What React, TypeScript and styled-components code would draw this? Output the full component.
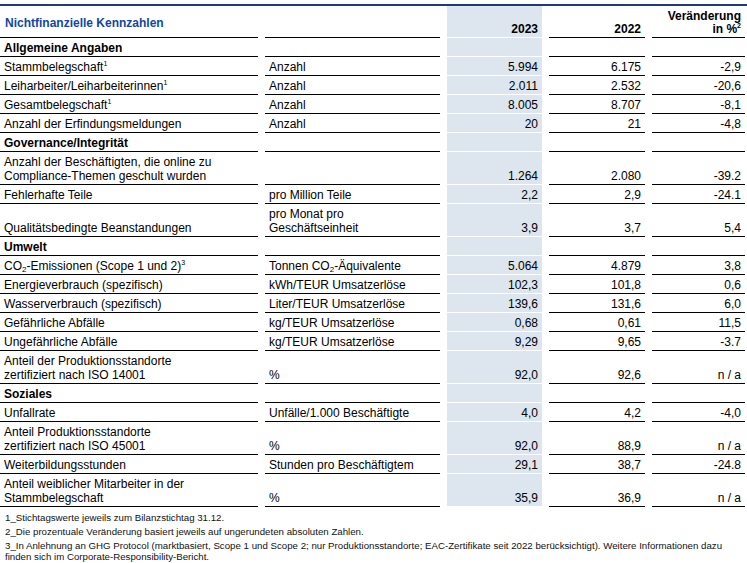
import React from "react";
import styled, { createGlobalStyle } from "styled-components";

const Global = createGlobalStyle`
  html, body { margin: 0; padding: 0; background: #fff; }
  body { font-family: "Liberation Sans", Arial, sans-serif; color: #000; }
`;

const COLS = "258px 175px 95px 96px 93px";
const SHADE = "#dde5ee";

const Page = styled.div`
  width: 747px;
  padding-top: 4px;
`;

const TopRule = styled.div`
  height: 2px;
  background: #1f3a78;
`;

const Row = styled.div`
  display: grid;
  grid-template-columns: ${COLS};
  column-gap: 7px;
  width: 745px;
`;

const Cell = styled.div<{ $align?: "left" | "right"; $shade?: boolean; $bold?: boolean }>`
  display: flex;
  flex-direction: column;
  justify-content: flex-end;
  text-align: ${(p) => (p.$align === "right" ? "right" : "left")};
  font-size: 12px;
  line-height: 14px;
  font-weight: ${(p) => (p.$bold ? 700 : 400)};
  padding: 3px ${(p) => (p.$align === "right" ? "4px" : "0")} 1px
    ${(p) => (p.$align === "right" ? "0" : "4px")};
  border-bottom: 1px solid ${(p) => (p.$shade ? "#fff" : "#000")};
  background: ${(p) => (p.$shade ? SHADE : "transparent")};
`;

const Inner = styled.div`
  display: block;
`;

const HeadCell = styled(Cell)`
  line-height: 13px;
  padding-top: 2px;
  padding-bottom: 1px;
  min-height: 28px;
`;

const Title = styled.div`
  color: #1246a6;
  font-weight: 700;
  font-size: 12px;
  line-height: 14px;
  padding: 0 0 6px 1px;
`;

const Sup = styled.sup`
  font-size: 7px;
  line-height: 0;
  vertical-align: 5px;
`;

const Sub = styled.sub`
  font-size: 8px;
  line-height: 0;
  vertical-align: -2px;
`;

const Notes = styled.div`
  padding: 5px 0 0 5px;
  font-family: "Liberation Sans", Arial, sans-serif;
  font-size: 9.7px;
  color: #111;
`;

const Note = styled.p`
  margin: 0 0 3px 0;
  line-height: 11px;
  white-space: nowrap;
`;

type DataRow = {
  label: React.ReactNode;
  unit?: React.ReactNode;
  v23: string;
  v22: string;
  chg: string;
};

type Block = { section: string; rows: DataRow[] };

const blocks: Block[] = [
  {
    section: "Allgemeine Angaben",
    rows: [
      { label: <>Stammbelegschaft<Sup>1</Sup></>, unit: "Anzahl", v23: "5.994", v22: "6.175", chg: "-2,9" },
      { label: <>Leiharbeiter/Leiharbeiterinnen<Sup>1</Sup></>, unit: "Anzahl", v23: "2.011", v22: "2.532", chg: "-20,6" },
      { label: <>Gesamtbelegschaft<Sup>1</Sup></>, unit: "Anzahl", v23: "8.005", v22: "8.707", chg: "-8,1" },
      { label: "Anzahl der Erfindungsmeldungen", unit: "Anzahl", v23: "20", v22: "21", chg: "-4,8" },
    ],
  },
  {
    section: "Governance/Integrität",
    rows: [
      {
        label: <>Anzahl der Beschäftigten, die online zu<br />Compliance-Themen geschult wurden</>,
        unit: "",
        v23: "1.264",
        v22: "2.080",
        chg: "-39.2",
      },
      { label: "Fehlerhafte Teile", unit: "pro Million Teile", v23: "2,2", v22: "2,9", chg: "-24.1" },
      {
        label: "Qualitätsbedingte Beanstandungen",
        unit: <>pro Monat pro<br />Geschäftseinheit</>,
        v23: "3,9",
        v22: "3,7",
        chg: "5,4",
      },
    ],
  },
  {
    section: "Umwelt",
    rows: [
      {
        label: <>CO<Sub>2</Sub>-Emissionen (Scope 1 und 2)<Sup>3</Sup></>,
        unit: <>Tonnen CO<Sub>2</Sub>-Äquivalente</>,
        v23: "5.064",
        v22: "4.879",
        chg: "3,8",
      },
      { label: "Energieverbrauch (spezifisch)", unit: "kWh/TEUR Umsatzerlöse", v23: "102,3", v22: "101,8", chg: "0,6" },
      { label: "Wasserverbrauch (spezifisch)", unit: "Liter/TEUR Umsatzerlöse", v23: "139,6", v22: "131,6", chg: "6,0" },
      { label: "Gefährliche Abfälle", unit: "kg/TEUR Umsatzerlöse", v23: "0,68", v22: "0,61", chg: "11,5" },
      { label: "Ungefährliche Abfälle", unit: "kg/TEUR Umsatzerlöse", v23: "9,29", v22: "9,65", chg: "-3.7" },
      {
        label: <>Anteil der Produktionsstandorte<br />zertifiziert nach ISO 14001</>,
        unit: "%",
        v23: "92,0",
        v22: "92,6",
        chg: "n / a",
      },
    ],
  },
  {
    section: "Soziales",
    rows: [
      { label: "Unfallrate", unit: "Unfälle/1.000 Beschäftigte", v23: "4,0", v22: "4,2", chg: "-4,0" },
      {
        label: <>Anteil Produktionsstandorte<br />zertifiziert nach ISO 45001</>,
        unit: "%",
        v23: "92,0",
        v22: "88,9",
        chg: "n / a",
      },
      { label: "Weiterbildungsstunden", unit: "Stunden pro Beschäftigtem", v23: "29,1", v22: "38,7", chg: "-24.8" },
      {
        label: <>Anteil weiblicher Mitarbeiter in der<br />Stammbelegschaft</>,
        unit: "%",
        v23: "35,9",
        v22: "36,9",
        chg: "n / a",
      },
    ],
  },
];

function SectionRow({ title }: { title: string }) {
  return (
    <Row>
      <Cell $bold><Inner>{title}</Inner></Cell>
      <Cell />
      <Cell $shade />
      <Cell />
      <Cell />
    </Row>
  );
}

function Line({ r }: { r: DataRow }) {
  return (
    <Row>
      <Cell><Inner>{r.label}</Inner></Cell>
      <Cell><Inner>{r.unit}</Inner></Cell>
      <Cell $shade $align="right"><Inner>{r.v23}</Inner></Cell>
      <Cell $align="right"><Inner>{r.v22}</Inner></Cell>
      <Cell $align="right"><Inner>{r.chg}</Inner></Cell>
    </Row>
  );
}

export default function App() {
  return (
    <>
      <Global />
      <Page>
        <TopRule />
        <Row>
          <HeadCell>
            <Title>Nichtfinanzielle Kennzahlen</Title>
          </HeadCell>
          <HeadCell />
          <HeadCell $shade $align="right" $bold><Inner>2023</Inner></HeadCell>
          <HeadCell $align="right" $bold><Inner>2022</Inner></HeadCell>
          <HeadCell $align="right" $bold>
            <Inner>
              Veränderung
              <br />
              in %<Sup>2</Sup>
            </Inner>
          </HeadCell>
        </Row>
        {blocks.map((b) => (
          <React.Fragment key={b.section}>
            <SectionRow title={b.section} />
            {b.rows.map((r, i) => (
              <Line key={i} r={r} />
            ))}
          </React.Fragment>
        ))}
        <Notes>
          <Note>1_Stichtagswerte jeweils zum Bilanzstichtag 31.12.</Note>
          <Note>2_Die prozentuale Veränderung basiert jeweils auf ungerundeten absoluten Zahlen.</Note>
          <Note>
            3_In Anlehnung an GHG Protocol (marktbasiert, Scope 1 und Scope 2; nur Produktionsstandorte; EAC-Zertifikate seit 2022 berücksichtigt). Weitere Informationen dazu
            <br />
            finden sich im Corporate-Responsibility-Bericht.
          </Note>
        </Notes>
      </Page>
    </>
  );
}
